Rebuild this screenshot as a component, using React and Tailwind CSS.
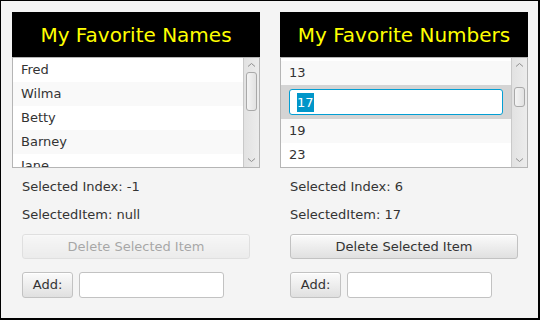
import React from "react";

function Chevron({ down }) {
  return (
    <svg width="9" height="6" viewBox="0 0 9 6">
      <path
        d={down ? "M1 1.5 L4.5 4.5 L8 1.5" : "M1 4.5 L4.5 1.5 L8 4.5"}
        stroke="#8f8f8f"
        strokeWidth="1"
        fill="none"
      />
    </svg>
  );
}

function ScrollBar({ thumbTop, thumbH }) {
  return (
    <div className="w-[16px] h-full shrink-0 border-l border-[#c9c9c9] bg-gradient-to-r from-[#e2e2e2] to-[#ececec] flex flex-col items-center">
      <div className="h-[14px] w-full flex items-center justify-center">
        <Chevron />
      </div>
      <div className="flex-1 w-full px-[2px]">
        <div
          className="w-full rounded-[3px] border border-[#a9a9a9] bg-gradient-to-r from-[#f4f4f4] to-[#e2e2e2]"
          style={{ marginTop: thumbTop, height: thumbH }}
        />
      </div>
      <div className="h-[14px] w-full flex items-center justify-center">
        <Chevron down />
      </div>
    </div>
  );
}

function Row({ text, odd }) {
  return (
    <div
      className={
        "h-[24px] shrink-0 flex items-center pl-[8px] text-[13px] text-[#333333] " +
        (odd ? "bg-[#f9f9f9]" : "bg-white")
      }
    >
      {text}
    </div>
  );
}

function Button({ children, disabled, className }) {
  return (
    <div
      className={
        "flex items-center justify-center rounded-[3px] border border-[#c2c2c2] bg-gradient-to-b from-[#fbfbfb] to-[#e0e0e0] text-[13px] shadow-[inset_0_1px_0_#ffffff] " +
        (disabled ? "opacity-40 text-[#333333] " : "text-[#333333] ") +
        (className || "")
      }
    >
      {children}
    </div>
  );
}

function Bottom({ index, item, disabled }) {
  return (
    <div className="px-[10px] flex flex-col text-[13px] text-[#333333]">
      <div className="mt-[11px] h-[16px] leading-[16px]">Selected Index: {index}</div>
      <div className="mt-[12px] h-[16px] leading-[16px]">SelectedItem: {item}</div>
      <Button disabled={disabled} className="mt-[11px] h-[25px] w-[228px]">
        Delete Selected Item
      </Button>
      <div className="mt-[13px] flex gap-[6px]">
        <Button className="h-[26px] w-[51px]">Add:</Button>
        <div className="h-[26px] w-[145px] rounded-[3px] border border-[#c2c2c2] bg-white" />
      </div>
    </div>
  );
}

function Header({ title }) {
  return (
    <div className="h-[45px] bg-black flex items-center justify-center text-[20px] text-[#ffff00]">
      {title}
    </div>
  );
}

export default function App() {
  return (
    <div
      className="w-[540px] h-[320px] bg-[#f4f4f4] border-t border-l border-r-2 border-b-2 border-black pt-[11px] pl-[11px] flex gap-[20px] overflow-hidden"
      style={{ fontFamily: '"DejaVu Sans", sans-serif' }}
    >
      <div className="w-[248px] flex flex-col">
        <Header title="My Favorite Names" />
        <div className="h-[111px] border border-[#b5b5b5] bg-white flex">
          <div className="flex-1 flex flex-col overflow-hidden">
            <Row text="Fred" />
            <Row text="Wilma" odd />
            <Row text="Betty" />
            <Row text="Barney" odd />
            <Row text="Jane" />
          </div>
          <ScrollBar thumbTop={0} thumbH={39} />
        </div>
        <Bottom index="-1" item="null" disabled />
      </div>

      <div className="w-[248px] flex flex-col">
        <Header title="My Favorite Numbers" />
        <div className="h-[111px] border border-[#b5b5b5] bg-white flex">
          <div className="flex-1 flex flex-col overflow-hidden">
            <div className="h-[3px] shrink-0 bg-white" />
            <Row text="13" odd />
            <div className="h-[34px] shrink-0 bg-[#d4d4d4] flex items-center pl-[8px] pr-[8px]">
              <div className="h-[26px] w-[214px] rounded-[3px] border-[1.5px] border-[#039ed3] bg-white flex items-center pl-[7px] text-[13px]">
                <span className="bg-[#0096c9] text-white leading-[19px] px-[0px]">17</span>
              </div>
            </div>
            <Row text="19" odd />
            <Row text="23" />
          </div>
          <ScrollBar thumbTop={15} thumbH={20} />
        </div>
        <Bottom index="6" item="17" />
      </div>
    </div>
  );
}
